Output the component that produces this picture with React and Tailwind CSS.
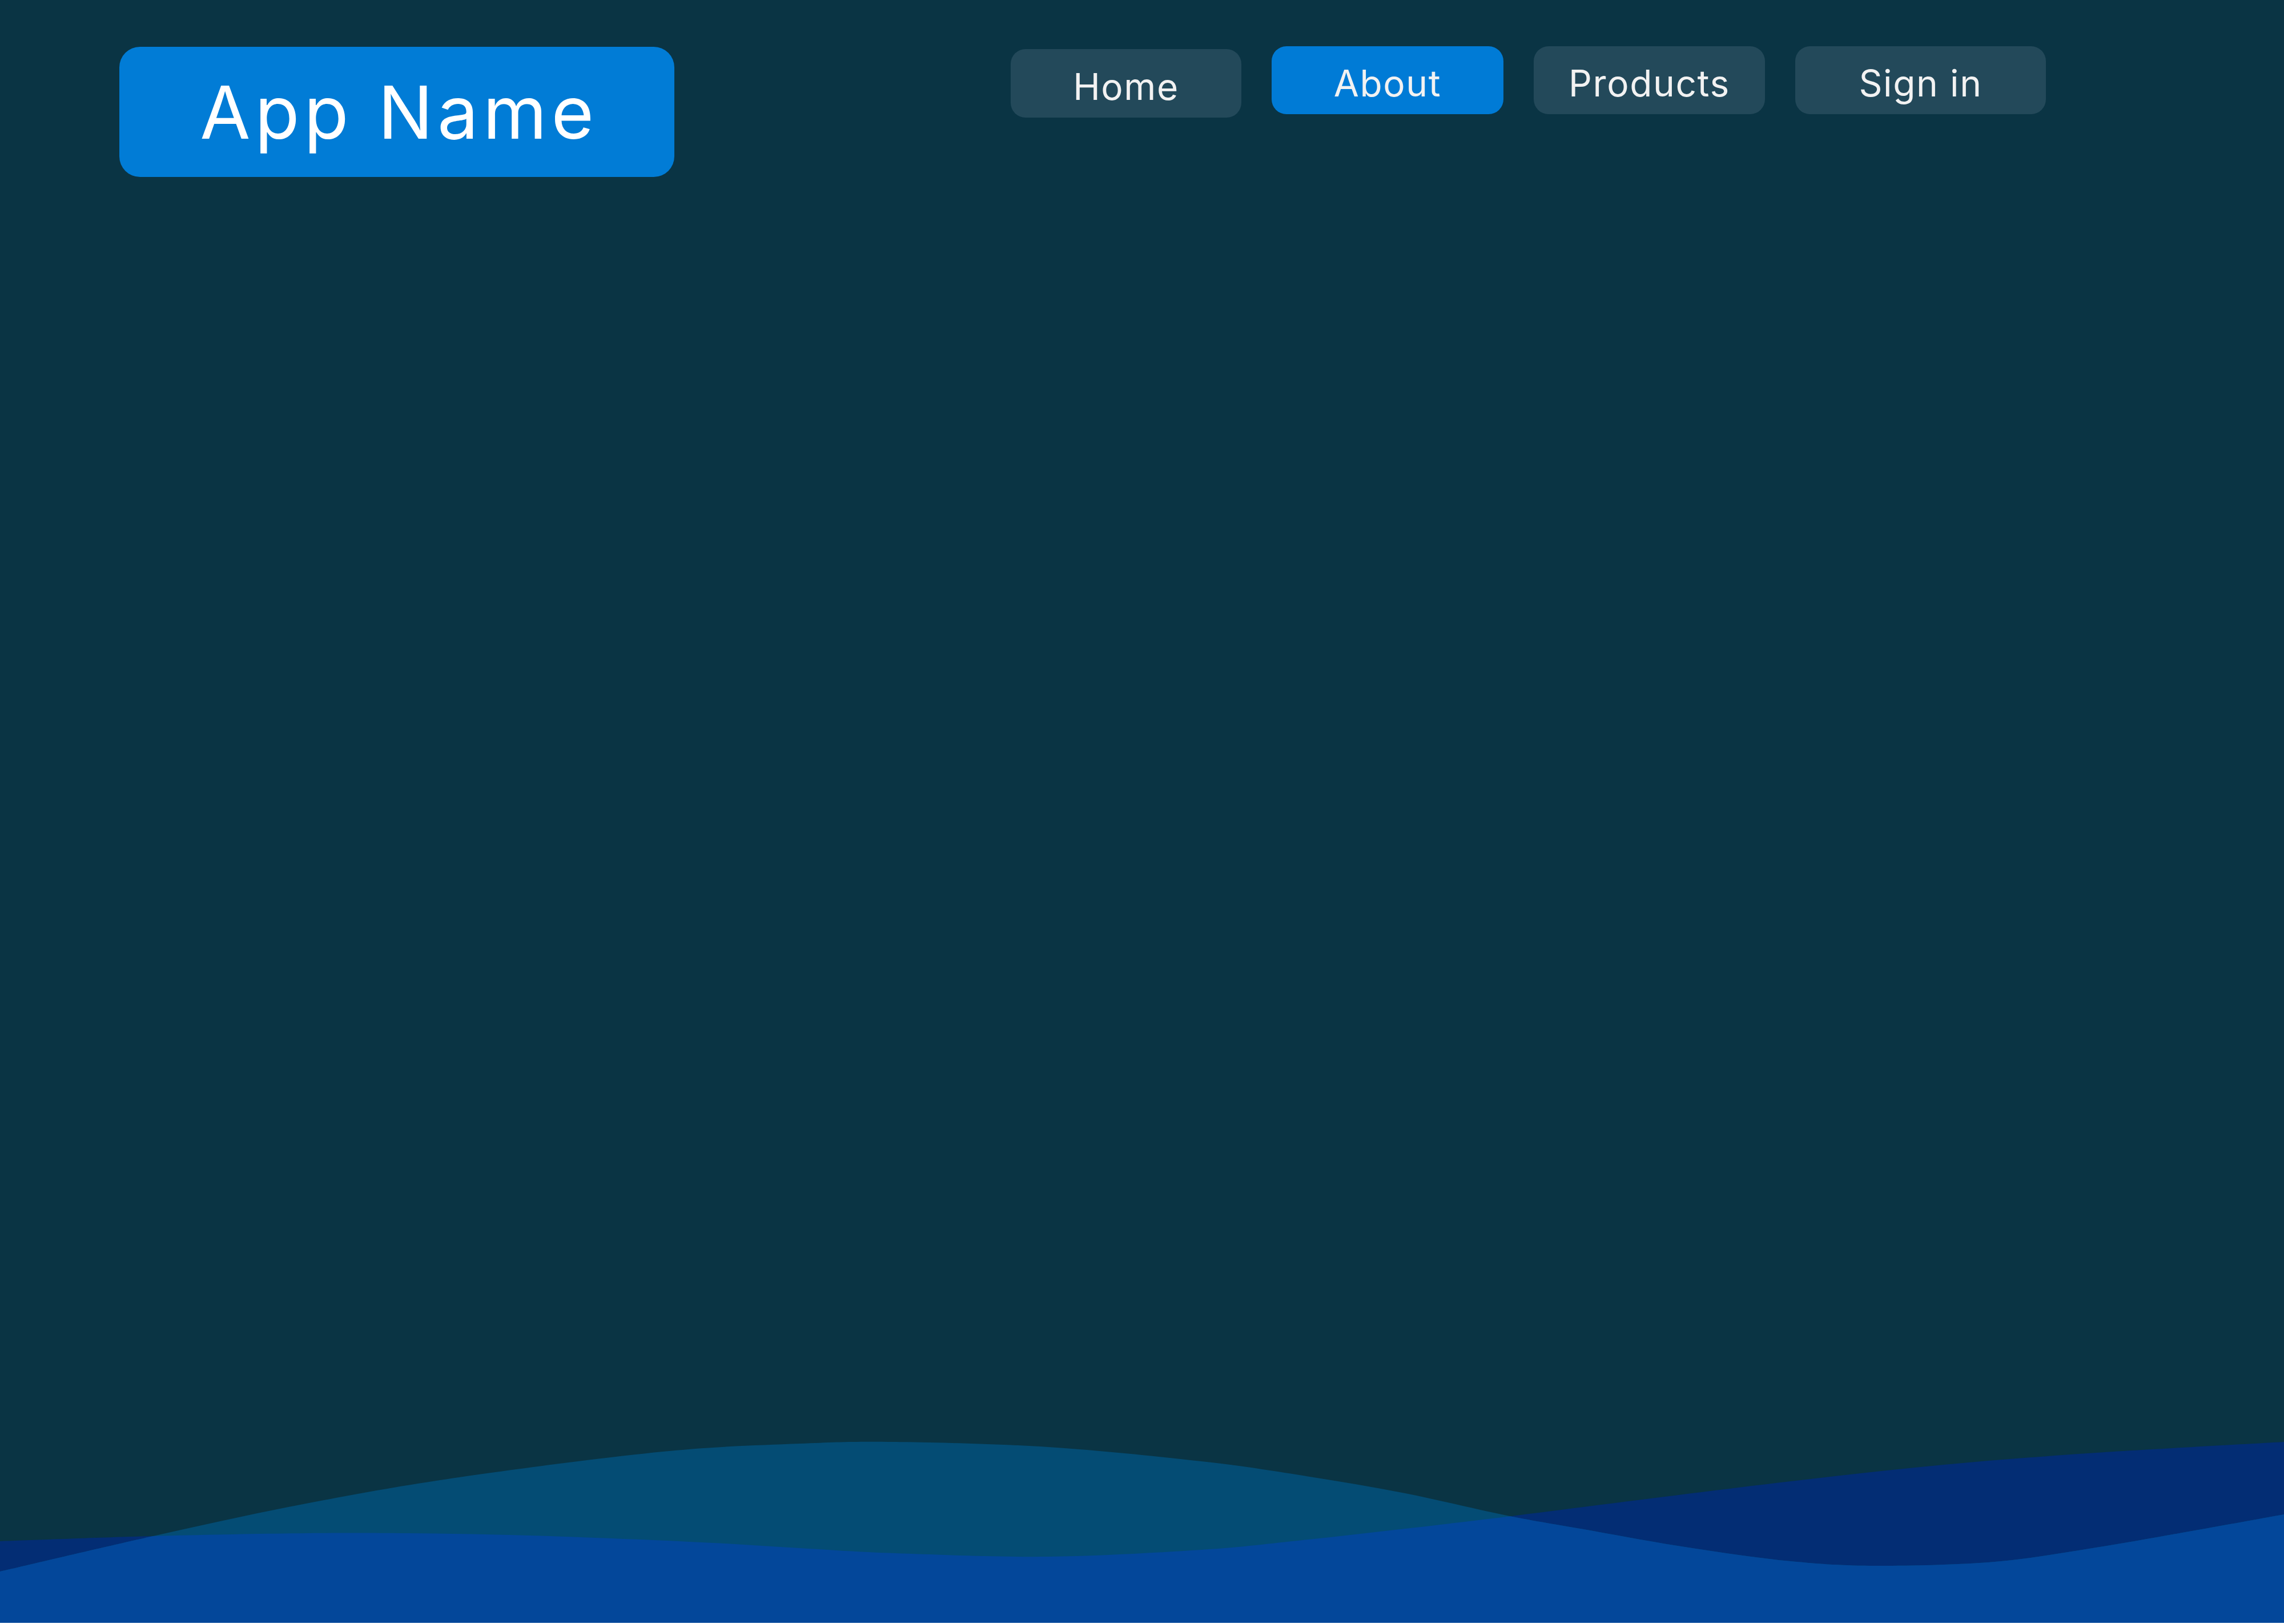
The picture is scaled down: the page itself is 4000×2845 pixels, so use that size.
import React from 'react'

// sampled outlines of the two waves (svg local coords, 4000 x 395)
const waveFront = [
  [0, 305], [268, 243], [536, 186], [804, 140], [1161, 95],
  [1400, 81], [1568, 78], [1836, 87], [2104, 112], [2282, 137], [2461, 168], [2639, 207],
  [2779, 232], [2957, 263], [3136, 287], [3287, 295], [3493, 288], [3671, 263],
  [3850, 232], [4000, 205],
]

const waveBack = [
  [0, 252], [268, 243], [536, 238], [714, 238], [893, 241], [1071, 247], [1250, 255],
  [1400, 264], [1568, 273], [1836, 279], [2104, 267], [2282, 250], [2461, 230],
  [2639, 209], [2868, 180], [3136, 147], [3404, 118], [3671, 97], [4000, 78],
]

function toPath(pts) {
  let d = `M${pts[0][0]},${pts[0][1]}`
  for (let i = 0; i < pts.length - 1; i++) {
    const p0 = pts[i - 1] || pts[i]
    const p1 = pts[i]
    const p2 = pts[i + 1]
    const p3 = pts[i + 2] || p2
    const c1x = p1[0] + (p2[0] - p0[0]) / 6
    const c1y = p1[1] + (p2[1] - p0[1]) / 6
    const c2x = p2[0] - (p3[0] - p1[0]) / 6
    const c2y = p2[1] - (p3[1] - p1[1]) / 6
    d += ` C${c1x.toFixed(1)},${c1y.toFixed(1)} ${c2x.toFixed(1)},${c2y.toFixed(1)} ${p2[0]},${p2[1]}`
  }
  return d + ' L4000,395 L0,395 Z'
}

function Waves() {
  const front = toPath(waveFront)
  const back = toPath(waveBack)
  return (
    <svg viewBox="0 0 4000 395" preserveAspectRatio="none" className="block w-full h-[395px] mt-auto">
      <defs>
        <clipPath id="backClip">
          <path d={back} />
        </clipPath>
      </defs>
      <path d={back} fill="#032d74" />
      <path d={front} fill="#044c74" />
      <path d={front} fill="#03479a" clipPath="url(#backClip)" />
    </svg>
  )
}

function NavButton({ label, active, className = '' }) {
  return (
    <button
      className={`flex items-center justify-center pt-[11px] h-[119px] rounded-[26px] text-[64px] leading-none tracking-[0.025em] text-[#f2f2f2] ${
        active ? 'bg-[#007bd6]' : 'bg-[#23495a]'
      } ${className}`}
    >
      {label}
    </button>
  )
}

export default function App() {
  return (
    <div className="flex flex-col h-[2843px] w-full bg-[#0a3444] overflow-hidden font-['Inter','Noto_Sans',sans-serif]">
      <header className="flex items-start pt-[82px] pl-[209px]">
        <div className="flex items-center justify-center w-[972px] h-[228px] rounded-[36px] bg-[#017cd6] text-white text-[128px] leading-none tracking-[0.06em] pt-[2px] pl-[8px]">
          App Name
        </div>
        <nav className="flex items-start gap-[53px] ml-[589px] -mt-px">
          <NavButton label="Home" className="w-[404px] h-[120px] mt-[5px]" />
          <NavButton label="About" active className="w-[406px]" />
          <NavButton label="Products" className="w-[405px]" />
          <NavButton label="Sign in" className="w-[439px]" />
        </nav>
      </header>
      <Waves />
    </div>
  )
}
